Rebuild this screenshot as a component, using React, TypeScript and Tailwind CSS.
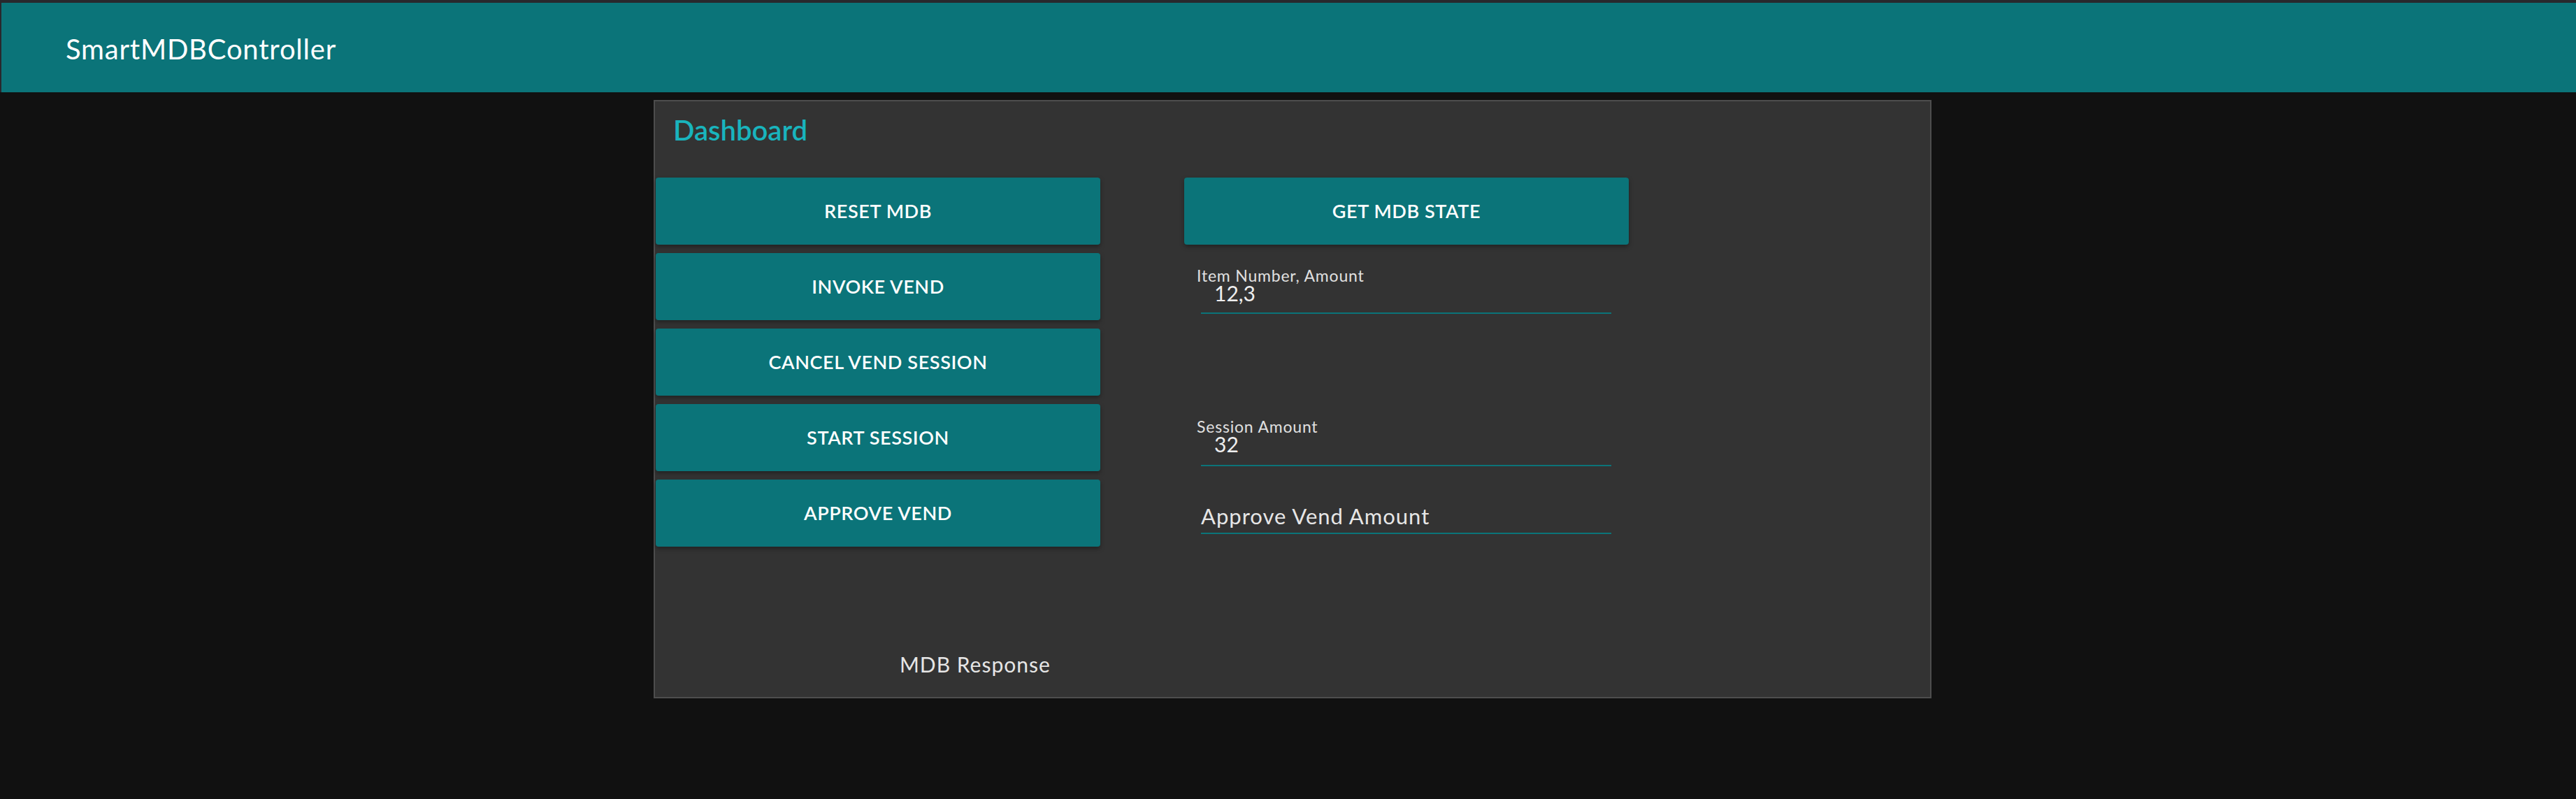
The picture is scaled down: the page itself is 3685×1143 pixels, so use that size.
import React from "react";

const leftButtons = [
  "RESET MDB",
  "INVOKE VEND",
  "CANCEL VEND SESSION",
  "START SESSION",
  "APPROVE VEND",
];

function ActionButton({ label }: { label: string }) {
  return (
    <button
      type="button"
      className="h-[96px] w-[636px] rounded-[4px] bg-[#0b7479] text-[27px] font-semibold tracking-[0.6px] text-white shadow-[0_3px_6px_rgba(0,0,0,0.35)]"
    >
      {label}
    </button>
  );
}

export default function App() {
  return (
    <div
      className="min-h-screen w-full bg-[#111111] text-white"
      style={{ fontFamily: "Lato, 'Open Sans', sans-serif" }}
    >
      {/* top bar */}
      <header className="flex h-[132px] items-start border-t-4 border-l-2 border-[#28282d] bg-[#0b7479] pl-[92px]">
        <h1 className="mt-[46px] text-[40px] font-normal leading-none tracking-[0.8px] text-white">
          SmartMDBController
        </h1>
      </header>

      <main className="pl-[935px] pt-[11px]">
        <section className="h-[856px] w-[1828px] border-2 border-[#4d4d4d] bg-[#333333]">
          <h2 className="ml-[26px] mt-[21px] text-[40px] font-semibold leading-none text-[#19b4bd]">
            Dashboard
          </h2>

          <div className="ml-px mt-[48px] flex gap-[120px]">
            {/* commands */}
            <div className="flex w-[636px] flex-col">
              <div className="flex flex-col gap-[12px]">
                {leftButtons.map((b) => (
                  <ActionButton key={b} label={b} />
                ))}
              </div>
              <p className="mt-[153px] pl-[349px] text-[30px] leading-none tracking-[1px] text-[#e6e6e6]">
                MDB Response
              </p>
            </div>

            {/* state + inputs */}
            <div className="flex w-[636px] flex-col">
              <ActionButton label="GET MDB STATE" />

              <div className="ml-[18px] mt-[33px]">
                <label className="block text-[23px] leading-none tracking-[0.8px] text-[#e0e0e0]">
                  Item Number, Amount
                </label>
                <div className="ml-[6px] mt-[-2px] w-[587px] border-b-2 border-[#0b7479] pb-[13px] pl-[19px] text-[30px] leading-none text-[#eeeeee]">
                  12,3
                </div>
              </div>

              <div className="ml-[18px] mt-[150px]">
                <label className="block text-[23px] leading-none tracking-[0.8px] text-[#e0e0e0]">
                  Session Amount
                </label>
                <div className="ml-[6px] mt-[-2px] w-[587px] border-b-2 border-[#0b7479] pb-[15px] pl-[19px] text-[30px] leading-none text-[#eeeeee]">
                  32
                </div>
              </div>

              <div className="ml-[24px] mt-[56px] w-[587px] border-b-2 border-[#0b7479] pb-[8px] text-[31px] leading-none tracking-[1px] text-[#e6e6e6]">
                Approve Vend Amount
              </div>
            </div>
          </div>
        </section>
      </main>
    </div>
  );
}
